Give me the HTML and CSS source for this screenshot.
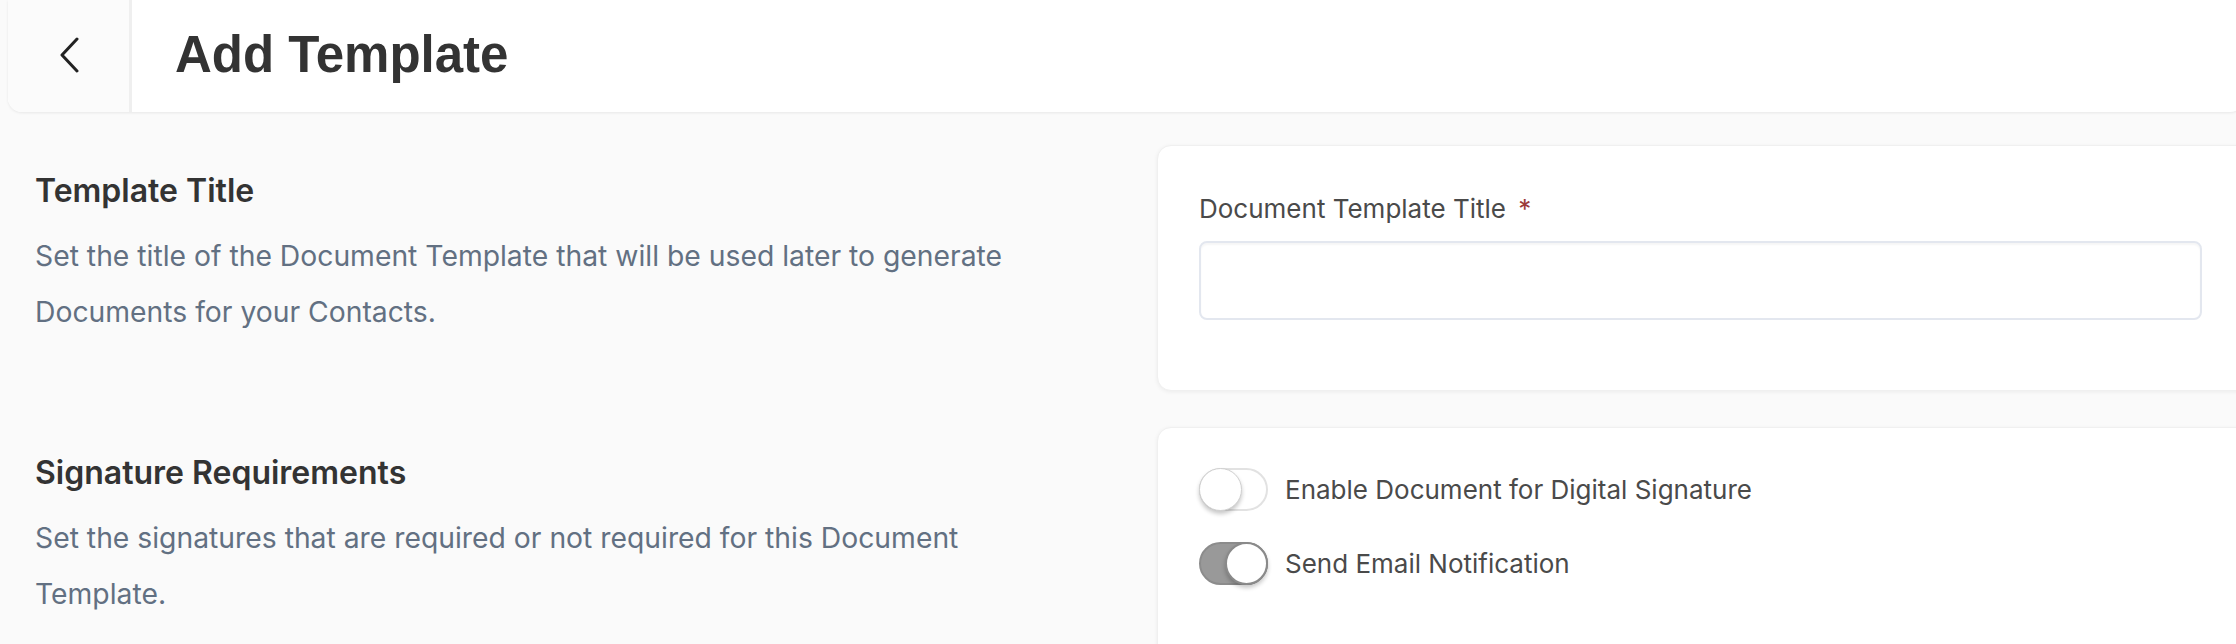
FILE: index.html
```html
<!DOCTYPE html>
<html lang="en">
<head>
    <meta charset="UTF-8">
    <meta name="viewport" content="width=device-width, initial-scale=1.0">
    <title>Add Template</title>
    <link rel="stylesheet" href="styles.css">
</head>
<body>

    <div class="page">

        <!-- Top bar -->
        <header class="topbar">
            <a class="back" href="#" aria-label="Back">
                <svg width="22" height="36" viewBox="0 0 22 36">
                    <path d="M19 2 L4 18 L19 34" fill="none" stroke="#222" stroke-width="3" stroke-linecap="round" stroke-linejoin="round"/>
                </svg>
            </a>
            <h1>Add Template</h1>
        </header>

        <!-- Template title -->
        <section class="section first">
            <div class="section-info">
                <h3>Template Title</h3>
                <p>Set the title of the Document Template that will be used later to generate Documents for your Contacts.</p>
            </div>
            <div class="card">
                <label class="field-label" for="templateTitle">Document Template Title <span class="required">*</span></label>
                <input type="text" id="templateTitle" name="template_title">
            </div>
        </section>

        <!-- Signature requirements -->
        <section class="section">
            <div class="section-info">
                <h3>Signature Requirements</h3>
                <p>Set the signatures that are required or not required for this Document Template.</p>
            </div>
            <div class="card toggles">
                <label class="toggle">
                    <input type="checkbox" name="digital_signature">
                    <span class="switch"></span>
                    Enable Document for Digital Signature
                </label>
                <label class="toggle">
                    <input type="checkbox" name="email_notification" checked>
                    <span class="switch"></span>
                    Send Email Notification
                </label>
            </div>
        </section>

    </div>

</body>
</html>
```

FILE: styles.css
```css
body {
    margin: 0;
    background-color: #fafafa;
    font-family: Inter, "Noto Sans", sans-serif;
    overflow: hidden;
}
.page {
    width: 2236px;
    margin-left: 8px;
}

/* top bar */
.topbar {
    display: flex;
    align-items: center;
    height: 112px;
    background: #fff;
    border-radius: 0 0 14px 14px;
    box-shadow: 0 1px 3px rgba(0, 0, 0, 0.08);
}
.back {
    display: flex;
    align-items: center;
    justify-content: center;
    width: 124px;
    height: 100%;
    background: #fbfbfb;
    border-right: 3px solid #efefef;
    border-bottom-left-radius: 14px;
    padding-bottom: 2px;
    box-sizing: border-box;
}
.topbar h1 {
    margin: 0 0 0 43px;
    padding-bottom: 3px;
    font-family: "Liberation Sans", Arial, sans-serif;
    font-size: 51px;
    font-weight: bold;
    color: #333;
}

/* sections */
.section {
    display: grid;
    grid-template-columns: 1149px 1fr;
    margin-top: 36px;
}
.section.first {
    margin-top: 33px;
}
.section-info {
    padding: 26px 0 0 27px;
}
.section-info h3 {
    margin: 0 0 18px;
    font-size: 32px;
    font-weight: 600;
    line-height: 39px;
    color: #333;
}
.section-info p {
    margin: 0;
    max-width: 1010px;
    font-size: 28.3px;
    line-height: 56px;
    color: #627082;
}
.card {
    background: #fff;
    border: 1px solid #f0f0f0;
    border-radius: 14px 0 0 14px;
    box-shadow: 0 1px 4px rgba(0, 0, 0, 0.06);
    padding: 43px 41px 70px;
}

/* title field */
.field-label {
    display: block;
    margin-bottom: 13px;
    font-size: 26px;
    line-height: 39px;
    color: #4a4a4a;
}
.required {
    margin-left: 5px;
    color: #9b3a3a;
}
.card input[type="text"] {
    display: block;
    width: 100%;
    height: 79px;
    box-sizing: border-box;
    border: 2px solid #e3e7ef;
    border-radius: 8px;
    box-shadow: inset 0 2px 2px rgba(0, 0, 0, 0.04);
    font-family: inherit;
    font-size: 26px;
}

/* toggles */
.toggles {
    padding-top: 40px;
    min-height: 300px;
}
.toggle {
    display: flex;
    align-items: center;
    gap: 17px;
    font-size: 26px;
    color: #4a4a4a;
    cursor: pointer;
}
.toggle + .toggle {
    margin-top: 31px;
}
.toggle input {
    display: none;
}
.switch {
    position: relative;
    width: 69px;
    height: 43px;
    box-sizing: border-box;
    border: 2px solid #e2e2e2;
    border-radius: 22px;
    background: #fff;
}
.switch::after {
    content: "";
    position: absolute;
    top: -2px;
    left: -2px;
    width: 43px;
    height: 43px;
    box-sizing: border-box;
    border: 1px solid #d0d0d0;
    border-radius: 50%;
    background: #fff;
    box-shadow: 0 3px 4px rgba(0, 0, 0, 0.22);
}
.toggle input:checked + .switch {
    background: #999;
    border-color: #8c8c8c;
}
.toggle input:checked + .switch::after {
    left: auto;
    right: -2px;
    border: 2px solid #8a8a8a;
}
```
